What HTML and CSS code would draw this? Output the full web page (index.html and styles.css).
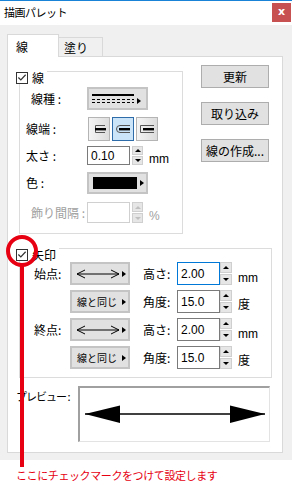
FILE: index.html
```html
<!DOCTYPE html>
<html lang="ja">
<head>
  <meta charset="UTF-8">
  <title>描画パレット</title>
  <link rel="stylesheet" href="styles.css">
</head>
<body>

  <div class="window">
    <div class="titlebar">
      <span class="title">描画パレット</span>
      <span class="close">x</span>
    </div>

    <div class="client">
      <div class="tabs">
        <div class="tab active">線</div>
        <div class="tab">塗り</div>
      </div>

      <div class="panel">
        <div class="top">
          <!-- 線 group -->
          <div class="group line-group">
            <div class="group-head">
              <span class="check"><svg width="11" height="11" viewBox="0 0 11 11"><path d="M1.5 5.5 L4.2 8.2 L9.5 2.5" fill="none" stroke="#333" stroke-width="1.3"/></svg></span>
              <span>線</span>
            </div>

            <div class="row r1">
              <span class="label indent">線種 :</span>
              <div class="drop">
                <svg width="42" height="12" viewBox="0 0 42 12">
                  <rect x="0" y="1" width="42" height="2" fill="#000"/>
                  <line x1="0" y1="6.5" x2="42" y2="6.5" stroke="#000" stroke-dasharray="3 2"/>
                  <line x1="0" y1="9.5" x2="42" y2="9.5" stroke="#000" stroke-dasharray="3 2"/>
                </svg>
                <span class="tri"></span>
              </div>
            </div>

            <div class="row r2">
              <span class="label">線端 :</span>
              <div class="caps">
                <div class="cap-btn">
                  <svg width="14" height="12" viewBox="0 0 14 12">
                    <path d="M13 2.5 H3.5 V9.5 H13" fill="none" stroke="#555"/>
                    <rect x="3" y="5" width="11" height="2.4" fill="#000"/>
                  </svg>
                </div>
                <div class="cap-btn on">
                  <svg width="16" height="12" viewBox="0 0 16 12">
                    <path d="M15 2.5 H5 A3.5 3.5 0 0 0 5 9.5 H15" fill="none" stroke="#555"/>
                    <rect x="4" y="5" width="11" height="2.4" fill="#000"/>
                  </svg>
                </div>
                <div class="cap-btn">
                  <svg width="16" height="12" viewBox="0 0 16 12">
                    <path d="M15 2.5 H1.5 V9.5 H15" fill="none" stroke="#555"/>
                    <rect x="4" y="5" width="11" height="2.4" fill="#000"/>
                  </svg>
                </div>
              </div>
            </div>

            <div class="row r3">
              <span class="label">太さ :</span>
              <div class="num small"><span class="val">0.10</span></div>
              <div class="spin small gap">
                <span class="up"></span><span class="down"></span>
              </div>
              <span class="unit">mm</span>
            </div>

            <div class="row r4">
              <span class="label">色 :</span>
              <div class="drop color">
                <span class="swatch"></span>
                <span class="tri"></span>
              </div>
            </div>

            <div class="row r5 disabled">
              <span class="label indent">飾り間隔 :</span>
              <div class="num small off"></div>
              <div class="spin small gap off">
                <span class="up"></span><span class="down"></span>
              </div>
              <span class="unit">%</span>
            </div>
          </div>

          <div class="side">
            <button class="btn">更新</button>
            <button class="btn">取り込み</button>
            <button class="btn">線の作成...</button>
          </div>
        </div>

        <!-- 矢印 group -->
        <div class="group arrow-group">
          <div class="group-head">
            <span class="check"><svg width="11" height="11" viewBox="0 0 11 11"><path d="M1.5 5.5 L4.2 8.2 L9.5 2.5" fill="none" stroke="#333" stroke-width="1.3"/></svg></span>
            <span>矢印</span>
          </div>

          <div class="arow">
            <span class="alabel">始点:</span>
            <div class="abtn">
              <svg width="44" height="10" viewBox="0 0 44 10">
                <path d="M1 5 H43 M9 1 L1 5 L9 9 M35 1 L43 5 L35 9" fill="none" stroke="#000"/>
              </svg>
              <span class="tri"></span>
            </div>
            <span class="alabel2">高さ:</span>
            <div class="num big focus"><span class="val">2.00</span></div>
            <div class="spin big"><span class="up"></span><span class="down"></span></div>
            <span class="aunit mm">mm</span>
          </div>

          <div class="arow">
            <span class="alabel"></span>
            <div class="abtn text"><span>線と同じ</span><span class="tri"></span></div>
            <span class="alabel2">角度:</span>
            <div class="num big"><span class="val">15.0</span></div>
            <div class="spin big"><span class="up"></span><span class="down"></span></div>
            <span class="aunit">度</span>
          </div>

          <div class="arow">
            <span class="alabel">終点:</span>
            <div class="abtn">
              <svg width="44" height="10" viewBox="0 0 44 10">
                <path d="M1 5 H43 M9 1 L1 5 L9 9 M35 1 L43 5 L35 9" fill="none" stroke="#000"/>
              </svg>
              <span class="tri"></span>
            </div>
            <span class="alabel2">高さ:</span>
            <div class="num big"><span class="val">2.00</span></div>
            <div class="spin big"><span class="up"></span><span class="down"></span></div>
            <span class="aunit mm">mm</span>
          </div>

          <div class="arow">
            <span class="alabel"></span>
            <div class="abtn text"><span>線と同じ</span><span class="tri"></span></div>
            <span class="alabel2">角度:</span>
            <div class="num big"><span class="val">15.0</span></div>
            <div class="spin big"><span class="up"></span><span class="down"></span></div>
            <span class="aunit">度</span>
          </div>
        </div>

        <!-- preview -->
        <div class="preview-row">
          <span class="plabel">プレビュー :</span>
          <div class="preview">
            <svg width="189" height="53" viewBox="0 0 189 53">
              <line x1="5" y1="26" x2="185" y2="26" stroke="#000" stroke-width="1.5"/>
              <path d="M5 26 L40 17.5 L40 35 Z" fill="#000"/>
              <path d="M185 26 L150 17.5 L150 35 Z" fill="#000"/>
            </svg>
          </div>
        </div>
      </div>
    </div>

    <div class="note">ここにチェックマークをつけて設定します</div>

    <!-- red annotation over the 矢印 checkbox -->
    <svg class="mark" width="40" height="240" viewBox="0 0 40 240">
      <circle cx="17" cy="18" r="14" fill="none" stroke="#e60012" stroke-width="4"/>
      <line x1="17" y1="32" x2="17" y2="234" stroke="#e60012" stroke-width="4"/>
    </svg>
  </div>

</body>
</html>
```

FILE: styles.css
```css
/* reset */
* {
  margin: 0;
  padding: 0;
  box-sizing: border-box;
}

body {
  width: 292px;
  height: 485px;
  overflow: hidden;
  background: #fff;
  color: #000;
  font-family: "Noto Sans CJK JP", "Noto Sans", sans-serif;
  font-size: 12px;
  line-height: 1;
}

.window {
  position: relative;
  height: 485px;
}

/* title bar */
.titlebar {
  height: 25px;
  border-top: 1px solid #1883d7;
  background: #fff;
  display: flex;
  justify-content: space-between;
  align-items: flex-start;
  padding: 0 1px 0 4px;
}

.title {
  font-size: 11px;
  letter-spacing: -0.5px;
  line-height: 23px;
}

.close {
  width: 19px;
  height: 19px;
  margin-top: 2px;
  background: #c75050;
  color: #fff;
  font-family: "DejaVu Sans", sans-serif;
  font-size: 11px;
  font-weight: 700;
  line-height: 18px;
  text-align: center;
}

/* client area */
.client {
  background: #f0f0f0;
  height: 435px;
  padding: 9px 9px 0 7px;
}

.tabs {
  display: flex;
  align-items: flex-end;
  height: 22px;
}

.tab {
  height: 19px;
  width: 45px;
  margin-left: -1px;
  border: 1px solid #d9d9d9;
  border-bottom: none;
  padding: 4px 0 0 5px;
  background: #f0f0f0;
}

.tab.active {
  position: relative;
  z-index: 1;
  height: 23px;
  width: 52px;
  margin: 0 0 -1px 0;
  padding: 6px 0 0 8px;
  background: #fff;
}

.panel {
  height: 397px;
  background: #fff;
  border: 1px solid #d9d9d9;
}

.top {
  display: flex;
  padding-top: 8px;
}

/* group boxes */
.group {
  border: 1px solid #dcdcdc;
  margin-left: 11px;
}

.group-head {
  display: inline-flex;
  align-items: center;
  gap: 4px;
  height: 13px;
  margin: -2px 0 0 -4px;
  padding-right: 3px;
  background: #fff;
}

.check {
  width: 12px;
  height: 12px;
  border: 1px solid #333;
  background: #fff;
  display: flex;
  align-items: center;
  justify-content: center;
}

.line-group {
  width: 164px;
  height: 163px;
  margin-top: 6px;
}

.row {
  display: flex;
  align-items: center;
}

.r1 { height: 23px; margin-top: 3px; }
.r2 { height: 24px; margin-top: 7px; }
.r3 { height: 19px; margin-top: 5px; }
.r4 { height: 22px; margin-top: 7px; }
.r5 { height: 21px; margin-top: 8px; }

.label {
  width: 67px;
  padding-left: 6px;
  flex: none;
}

.label.indent { padding-left: 11px; }

.disabled .label,
.disabled .unit { color: #a0a0a0; }

.drop {
  width: 61px;
  height: 100%;
  background: #e1e1e1;
  border: 2px solid #c4c4c4;
  display: flex;
  align-items: center;
  padding-left: 3px;
  gap: 3px;
}

.tri {
  width: 0;
  height: 0;
  border-top: 3.5px solid transparent;
  border-bottom: 3.5px solid transparent;
  border-left: 4px solid #000;
}

.drop .tri { margin-top: 4px; }
.drop.color .tri { margin-top: 0; }

.swatch {
  width: 44px;
  height: 12px;
  margin-left: 1px;
  background: #000;
}

.caps {
  display: flex;
  gap: 2px;
  height: 100%;
  margin-left: 1px;
}

.cap-btn {
  width: 22px;
  height: 100%;
  background: linear-gradient(90deg, #f4f4f4, #dcdcdc);
  border: 1px solid #b4b4b4;
  display: flex;
  align-items: center;
  justify-content: center;
}

.cap-btn.on {
  background: #cce4f7;
  border-color: #2d6ca8;
}

/* number boxes */
.num {
  height: 100%;
  border: 1px solid #7a7a7a;
  background: #fff;
  display: flex;
  align-items: center;
  padding-left: 3px;
  font-family: "Liberation Sans", sans-serif;
  font-size: 12px;
}

.num.small { width: 43px; }
.num.big { width: 43px; }
.num.focus { border-color: #0078d7; }
.num.off { border-color: #d0d0d0; }

.spin {
  height: 100%;
  width: 12px;
  display: flex;
  flex-direction: column;
  gap: 1px;
}

.spin.gap { margin-left: 2px; width: 11px; }

.spin span {
  flex: 1;
  background: #e6e6e6;
  border: 1px solid #cfcfcf;
  display: flex;
  align-items: center;
  justify-content: center;
}

.spin .up::after,
.spin .down::after {
  content: "";
  border-left: 3px solid transparent;
  border-right: 3px solid transparent;
}

.spin .up::after { border-bottom: 3px solid #000; }
.spin .down::after { border-top: 3px solid #000; }
.spin.off .up::after { border-bottom-color: #bfbfbf; }
.spin.off .down::after { border-top-color: #bfbfbf; }

.unit {
  margin-left: 6px;
  margin-top: 7px;
  font-family: "Liberation Sans", sans-serif;
}

/* side buttons */
.side {
  display: flex;
  flex-direction: column;
  gap: 14px;
  margin-left: 18px;
}

.btn {
  width: 68px;
  height: 23px;
  background: #e1e1e1;
  border: 1px solid #adadad;
  font-family: "Noto Sans CJK JP", sans-serif;
  font-size: 12px;
  color: #000;
}

/* arrow group */
.arrow-group {
  width: 253px;
  height: 130px;
  margin-top: 14px;
}

.arow {
  display: flex;
  align-items: center;
  height: 23px;
  margin-top: 5px;
}

.group-head + .arow { margin-top: 1px; }

.alabel {
  width: 50px;
  padding-left: 14px;
  flex: none;
}

.abtn {
  width: 60px;
  height: 100%;
  background: #e1e1e1;
  border: 2px solid #c4c4c4;
  display: flex;
  align-items: center;
  padding-left: 4px;
  gap: 2px;
}

.abtn.text {
  font-size: 10px;
  padding-left: 5px;
  gap: 5px;
}

.alabel2 {
  width: 34px;
  margin-left: 13px;
  flex: none;
}

.aunit {
  margin-left: 6px;
  margin-top: 4px;
}

.aunit.mm {
  margin-top: 8px;
  font-family: "Liberation Sans", sans-serif;
}

/* preview */
.preview-row {
  display: flex;
  margin-top: 8px;
}

.plabel {
  width: 70px;
  padding: 5px 0 0 8px;
  flex: none;
  white-space: nowrap;
  font-size: 11px;
  letter-spacing: -1px;
}

.preview {
  width: 192px;
  height: 56px;
  border-top: 2px solid #a0a0a0;
  border-left: 2px solid #a0a0a0;
  border-right: 1px solid #e3e3e3;
  border-bottom: 1px solid #e3e3e3;
  background: #fff;
}

.preview svg { display: block; }

/* annotation */
.note {
  padding: 10px 0 0 16px;
  color: #e60012;
  font-size: 11px;
  letter-spacing: -0.4px;
}

.mark {
  position: absolute;
  left: 5px;
  top: 233px;
}
```
